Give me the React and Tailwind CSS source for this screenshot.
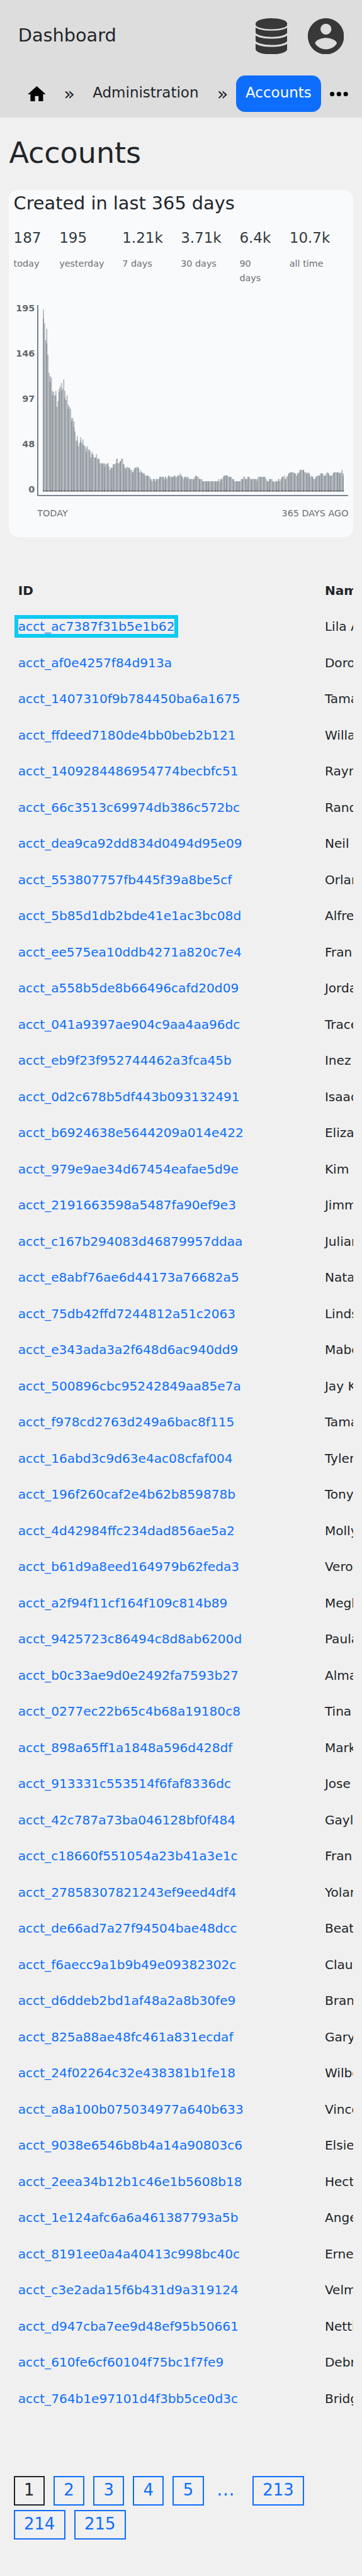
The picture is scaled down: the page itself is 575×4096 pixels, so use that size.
import React from "react";

const ACCOUNTS = [
  ["ac7387f31b5e1b62", "Lila Adams"],
  ["af0e4257f84d913a", "Dorothy"],
  ["1407310f9b784450ba6a1675", "Tamara"],
  ["ffdeed7180de4bb0beb2b121", "Willard"],
  ["1409284486954774becbfc51", "Raymond"],
  ["66c3513c69974db386c572bc", "Randy"],
  ["dea9ca92dd834d0494d95e09", "Neil"],
  ["553807757fb445f39a8be5cf", "Orlando"],
  ["5b85d1db2bde41e1ac3bc08d", "Alfred"],
  ["ee575ea10ddb4271a820c7e4", "Fran"],
  ["a558b5de8b66496cafd20d09", "Jordan"],
  ["041a9397ae904c9aa4aa96dc", "Tracey"],
  ["eb9f23f952744462a3fca45b", "Inez"],
  ["0d2c678b5df443b093132491", "Isaac"],
  ["b6924638e5644209a014e422", "Elizabeth"],
  ["979e9ae34d67454eafae5d9e", "Kim"],
  ["2191663598a5487fa90ef9e3", "Jimmy"],
  ["c167b294083d46879957ddaa", "Julian"],
  ["e8abf76ae6d44173a76682a5", "Natalie"],
  ["75db42ffd7244812a51c2063", "Lindsey"],
  ["e343ada3a2f648d6ac940dd9", "Mabel"],
  ["500896cbc95242849aa85e7a", "Jay King"],
  ["f978cd2763d249a6bac8f115", "Tamara"],
  ["16abd3c9d63e4ac08cfaf004", "Tyler"],
  ["196f260caf2e4b62b859878b", "Tony"],
  ["4d42984ffc234dad856ae5a2", "Molly"],
  ["b61d9a8eed164979b62feda3", "Veronica"],
  ["a2f94f11cf164f109c814b89", "Meghan"],
  ["9425723c86494c8d8ab6200d", "Paula"],
  ["b0c33ae9d0e2492fa7593b27", "Alma"],
  ["0277ec22b65c4b68a19180c8", "Tina"],
  ["898a65ff1a1848a596d428df", "Mark"],
  ["913331c553514f6faf8336dc", "Jose"],
  ["42c787a73ba046128bf0f484", "Gayle"],
  ["c18660f551054a23b41a3e1c", "Fran"],
  ["27858307821243ef9eed4df4", "Yolanda"],
  ["de66ad7a27f94504bae48dcc", "Beatrice"],
  ["f6aecc9a1b9b49e09382302c", "Claude"],
  ["d6ddeb2bd1af48a2a8b30fe9", "Brandy"],
  ["825a88ae48fc461a831ecdaf", "Gary"],
  ["24f02264c32e438381b1fe18", "Wilbert"],
  ["a8a100b075034977a640b633", "Vincent"],
  ["9038e6546b8b4a14a90803c6", "Elsie"],
  ["2eea34b12b1c46e1b5608b18", "Hector"],
  ["1e124afc6a6a461387793a5b", "Angel"],
  ["8191ee0a4a40413c998bc40c", "Ernest"],
  ["c3e2ada15f6b431d9a319124", "Velma"],
  ["d947cba7ee9d48ef95b50661", "Nettie"],
  ["610fe6cf60104f75bc1f7fe9", "Debra"],
  ["764b1e97101d4f3bb5ce0d3c", "Bridget"],
];

const STATS = [
  ["187", "today"],
  ["195", "yesterday"],
  ["1.21k", "7 days"],
  ["3.71k", "30 days"],
  ["6.4k", "90 days"],
  ["10.7k", "all time"],
];

// Height of each one-pixel column, from today backwards.
const HEIGHTS = [
  161, 149, 134, 144, 121, 105, 102, 101, 89, 88, 85, 89, 75, 80, 91, 93, 96, 91, 99, 89,
  81, 85, 77, 75, 73, 65, 65, 62, 53, 45, 49, 40, 43, 48, 43, 46, 41, 40, 38, 40,
  37, 37, 30, 35, 33, 30, 30, 33, 29, 29, 25, 25, 25, 25, 25, 24, 24, 25, 22, 19,
  21, 21, 24, 24, 25, 29, 25, 25, 27, 29, 29, 24, 21, 21, 22, 21, 21, 19, 19, 17,
  19, 21, 21, 22, 21, 17, 19, 17, 16, 16, 14, 14, 14, 14, 13, 11, 9, 11, 11, 9,
  11, 11, 11, 13, 13, 13, 13, 11, 13, 11, 13, 14, 13, 13, 13, 13, 14, 13, 13, 14,
  14, 16, 14, 13, 11, 13, 13, 13, 13, 11, 11, 11, 11, 11, 13, 14, 13, 13, 11, 11,
  11, 9, 9, 9, 9, 9, 9, 9, 9, 9, 9, 9, 9, 9, 9, 11, 9, 11, 11, 13,
  14, 14, 14, 14, 13, 13, 13, 11, 11, 9, 9, 9, 9, 9, 9, 11, 11, 13, 13, 11,
  11, 13, 13, 11, 11, 11, 11, 11, 11, 11, 13, 13, 13, 13, 13, 13, 13, 11, 9, 9,
  11, 11, 11, 9, 8, 9, 9, 9, 11, 9, 11, 13, 13, 14, 11, 13, 14, 16, 17, 17,
  17, 17, 16, 16, 14, 16, 17, 19, 19, 19, 19, 17, 17, 16, 17, 16, 13, 14, 13, 11,
  11, 13, 14, 14, 14, 16, 16, 16, 14, 14, 16, 17, 16, 14, 14, 14, 16, 17, 17, 17,
  17, 17, 16, 17, 19, 16,
];

// Columns in which two days share a pixel: height of the shorter day.
const SHORTER = {
  0: 153, 3: 131, 6: 97, 8: 85, 11: 85, 14: 88, 16: 89, 19: 83, 22: 73, 25: 62, 27: 57,
  30: 45, 33: 45, 35: 41, 38: 35, 41: 35, 43: 33, 52: 24, 54: 22, 73: 19, 127: 11,
  143: 8, 189: 9, 265: 14,
};

const DAYS = 365;
const overlaps = [];
for (let day = 1; day < DAYS; day++) {
  const column = Math.floor(day * 0.73 + 0.19);
  if (column === Math.floor((day - 1) * 0.73 + 0.19)) overlaps.push(column);
}

const BASE = 165;
const areaPath =
  `M5 ${BASE}` + HEIGHTS.map((h) => `V${BASE - h}h1`).join("") + `V${BASE}Z`;
const overlapPath = overlaps
  .map((c) => `M${5 + c} ${BASE}v${-(SHORTER[c] ?? HEIGHTS[c])}h1V${BASE}Z`)
  .join("");
const overlapFoot = overlaps.map((c) => `M${5 + c} ${BASE}v-1h1v1Z`).join("");

function DatabaseIcon() {
  return (
    <svg viewBox="0 0 28 32" className="h-8 w-7" fill="#383838">
      <path d="M0 4.8C0 2 6.3 0 14 0S28 2 28 4.8V6C27.4 8.1 21.3 9.7 14 9.7S.6 8.1 0 6Z" />
      <path d="M0 8.2C3 10.2 8 11 14 11S25 10.2 28 8.2V12.8C27 15 21 16.5 14 16.5S1 15 0 12.8Z" />
      <path d="M0 15.35C3 17.35 8 18.15 14 18.15S25 17.35 28 15.35V19.95C27 22.15 21 23.65 14 23.65S1 22.15 0 19.95Z" />
      <path d="M0 22.5C3 24.5 8 25.3 14 25.3S25 24.5 28 22.5V27.2C28 30 21.7 32 14 32S0 30 0 27.2Z" />
    </svg>
  );
}

function AccountIcon() {
  return (
    <svg viewBox="2 2 20 20" className="size-8" fill="#383838">
      <path d="M12 2C6.48 2 2 6.48 2 12s4.48 10 10 10 10-4.48 10-10S17.52 2 12 2zm0 3c1.66 0 3 1.34 3 3s-1.34 3-3 3-3-1.34-3-3 1.34-3 3-3zm0 14.2c-2.5 0-4.71-1.28-6-3.22.03-1.99 4-3.08 6-3.08 1.99 0 5.97 1.09 6 3.08-1.29 1.94-3.5 3.22-6 3.22z" />
    </svg>
  );
}

function Header() {
  return (
    <header className="h-[104px] bg-[#dddddd]">
      <div className="flex h-16 items-center pr-4 pl-4">
        <span className="flex-1 pb-px text-[16px] leading-6">Dashboard</span>
        <DatabaseIcon />
        <span className="w-[18px]" />
        <AccountIcon />
      </div>
      <nav className="mt-[3px] flex h-8 items-center pl-[24.3px] text-[12.8px] whitespace-nowrap">
        <svg viewBox="2 3 20 17" className="h-[13.6px] w-4 shrink-0" fill="#000">
          <path d="M10 20v-6h4v6h5v-8h3L12 3 2 12h3v8z" />
        </svg>
        <span className="ml-4 w-[9.8px] text-[16px]">»</span>
        <span className="ml-[15.8px] w-[94px] pb-[2px]">Administration</span>
        <span className="ml-4 w-[9.8px] text-[16px]">»</span>
        <span className="ml-[7px] flex h-8 w-[75px] items-center justify-center rounded-lg bg-[#0d6efd] pb-[2px] text-white">
          Accounts
        </span>
        <svg viewBox="4 10 16 4" className="ml-2 h-1 w-4 shrink-0" fill="#000">
          <circle cx="6" cy="12" r="2" />
          <circle cx="12" cy="12" r="2" />
          <circle cx="18" cy="12" r="2" />
        </svg>
      </nav>
    </header>
  );
}

function Chart() {
  return (
    <div className="mt-[16.4px]">
      <div className="flex">
        <div className="flex h-[168px] w-[18.7px] flex-col justify-between text-right text-[8px] leading-[8px] font-bold text-[#63686c]">
          {[195, 146, 97, 48, 0].map((v) => (
            <span key={v}>{v}</span>
          ))}
        </div>
        <svg viewBox="0 0 275 169" className="mt-px ml-[2.3px] h-[169px] w-[275px]">
          <path d={areaPath} fill="#6c757d" fillOpacity="0.5" />
          <path d={overlapPath} fill="#6c757d" fillOpacity="0.5" />
          <path d={`M5 ${BASE - 1}h266v1H5Z`} fill="#212529" fillOpacity="0.35" />
          <path d={overlapFoot} fill="#212529" fillOpacity="0.35" />
          <path d="M0 0H1V168H275V169H0Z" fill="#6c757d" />
        </svg>
      </div>
      <div className="mt-[10.4px] flex justify-between pr-1 pl-[21px] text-[8px] leading-[10px] text-[#6c7073]">
        <span>TODAY</span>
        <span>365 DAYS AGO</span>
      </div>
    </div>
  );
}

function StatsCard() {
  return (
    <section className="mx-2 h-[307px] rounded-lg bg-[#f8fafc] pl-1">
      <h2 className="h-[23.4px] text-[16px] leading-[23.8px]">Created in last 365 days</h2>
      <div className="mt-[9.7px] grid grid-cols-[40.4px_55.7px_51.7px_51.9px_44.2px_1fr]">
        {STATS.map(([value, label]) => (
          <div key={label} className="h-[51.5px]">
            <div className="text-[12.8px] leading-5 text-[#343a40]">{value}</div>
            <div
              className={
                label === "90 days"
                  ? "mt-[6.2px] w-6 text-[8px] leading-[12.8px] text-[#6c7073]"
                  : "mt-[6.2px] text-[8px] leading-[12.8px] whitespace-nowrap text-[#6c7073]"
              }
            >
              {label}
            </div>
          </div>
        ))}
      </div>
      <Chart />
    </section>
  );
}

function AccountsTable() {
  return (
    <div className="mt-[31.9px] mr-2 ml-3 overflow-hidden pl-1 text-[11.2px] leading-[13px] whitespace-nowrap">
      <div className="flex h-8 items-center font-bold">
        <span className="w-[271.1px] shrink-0">ID</span>
        <span>Name</span>
      </div>
      {ACCOUNTS.map(([id, name], i) => (
        <div key={id} className="flex h-8 items-center">
          <span className="w-[271.1px] shrink-0 text-[#0d6efd]">
            <a className={i === 0 ? "outline-[3.4px] outline-[#0dcaf0]" : ""}>acct_{id}</a>
          </span>
          <span>{name}</span>
        </div>
      ))}
    </div>
  );
}

function PageLink({ children, current }) {
  return (
    <a
      className={
        current
          ? "flex h-[26px] items-center border-[1.15px] border-[#212529] px-2 pb-px text-[#212529]"
          : "flex h-[26px] items-center border-[1.15px] border-[#0d6efd] px-2 pb-px text-[#0d6efd]"
      }
    >
      {children}
    </a>
  );
}

function Pagination() {
  return (
    <nav className="mt-[52.1px] flex flex-wrap gap-x-[7.8px] gap-y-1 px-3 text-[14.4px] leading-[17px]">
      <PageLink current>1</PageLink>
      <PageLink>2</PageLink>
      <PageLink>3</PageLink>
      <PageLink>4</PageLink>
      <PageLink>5</PageLink>
      <span className="flex h-[26px] w-[27.4px] items-center pb-[2px] pl-[3.5px] text-[16px] text-[#0d6efd]">…</span>
      <PageLink>213</PageLink>
      <PageLink>214</PageLink>
      <PageLink>215</PageLink>
    </nav>
  );
}

export default function App() {
  return (
    <div className="h-[2279.6px] w-80 overflow-hidden bg-[#f0f0f0] font-['DejaVu_Sans',sans-serif] text-[#212529] [zoom:1.796875]">
      <Header />
      <h1 className="h-16 pt-[11.7px] pl-2 text-[25.6px] leading-10">Accounts</h1>
      <StatsCard />
      <AccountsTable />
      <Pagination />
    </div>
  );
}
